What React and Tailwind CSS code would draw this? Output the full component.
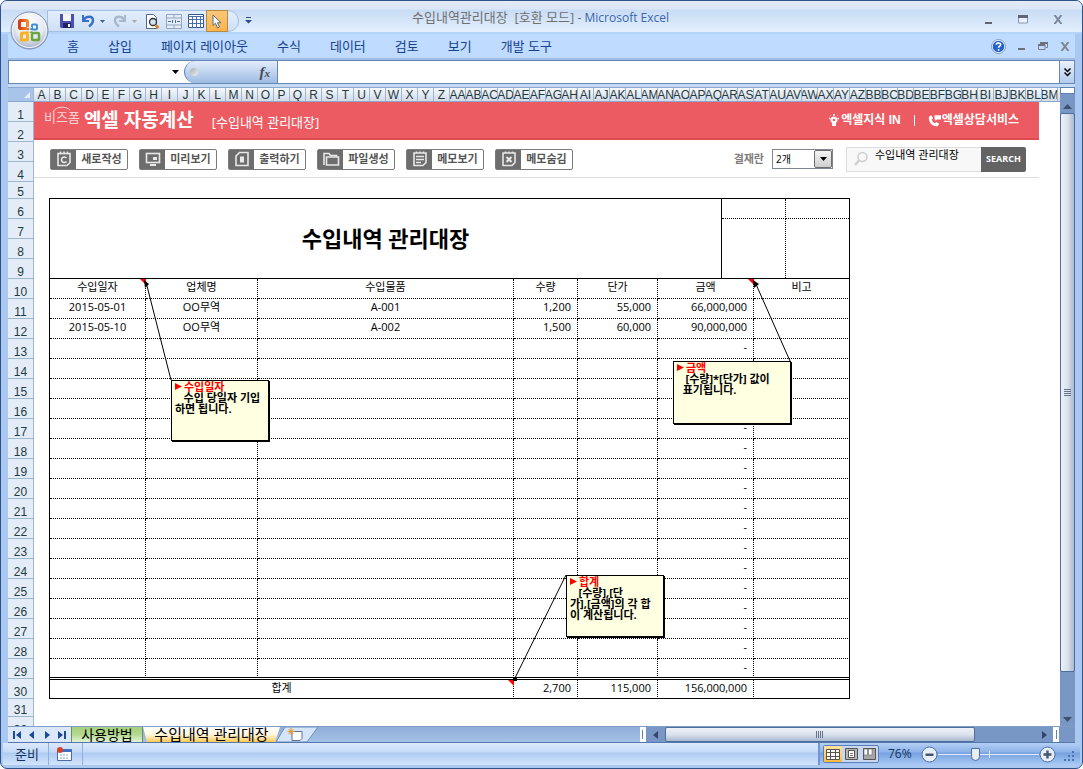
import React, { useState } from 'react';

const kr = "font-['Open_Sans','Noto_Sans_CJK_KR',sans-serif]";
const ui = "font-['Liberation_Sans','Noto_Sans_CJK_KR',sans-serif]";

const letters = 'ABCDEFGHIJKLMNOPQRSTUVWXYZ'.split('');
// column BA is hidden on this sheet
const columns = [
  ...letters,
  ...letters.map((l) => 'A' + l),
  ...letters.slice(1, 13).map((l) => 'B' + l),
];

const menus = ['홈', '삽입', '페이지 레이아웃', '수식', '데이터', '검토', '보기', '개발 도구'];

const entries = [
  { date: '2015-05-01', company: 'OO무역', item: 'A-001', qty: '1,200', price: '55,000', amount: '66,000,000' },
  { date: '2015-05-10', company: 'OO무역', item: 'A-002', qty: '1,500', price: '60,000', amount: '90,000,000' },
  ...Array.from({ length: 17 }, () => ({ date: '', company: '', item: '', qty: '', price: '', amount: '-' })),
];

const iconProps = { width: 18, height: 18, viewBox: '0 0 18 18', fill: 'none', stroke: '#e8e8e8', strokeWidth: 1.6 };

const tools = [
  {
    label: '새로작성',
    icon: (
      <svg {...iconProps}>
        <path d="M3 3.5h12v9l-3 3H3z M5.5 1.5v3 M9 1.5v3 M12.5 1.5v3" />
        <path d="M11.5 8a2.8 2.8 0 1 0 0 3.5" />
      </svg>
    ),
  },
  {
    label: '미리보기',
    icon: (
      <svg {...iconProps}>
        <rect x="2.5" y="3.5" width="13" height="9" />
        <path d="M6 15h6" strokeWidth="2" />
        <rect x="9" y="7" width="4" height="3" fill="#e8e8e8" stroke="none" />
      </svg>
    ),
  },
  {
    label: '출력하기',
    icon: (
      <svg {...iconProps}>
        <path d="M6.5 2.5H15v13H3V6z" />
        <path d="M7 6.5h4v6H7z" fill="#e8e8e8" stroke="none" />
      </svg>
    ),
  },
  {
    label: '파일생성',
    icon: (
      <svg {...iconProps}>
        <path d="M2 15V3.5h5l1.5 2h6V7" />
        <path d="M4.5 15V7h12v8z" />
      </svg>
    ),
  },
  {
    label: '메모보기',
    icon: (
      <svg {...iconProps}>
        <path d="M3 3h12v9.5l-3 3H3z M5.5 1.5v2 M9 1.5v2 M12.5 1.5v2 M5 6.5h8 M5 9.5h8 M5 12.5h5" />
      </svg>
    ),
  },
  {
    label: '메모숨김',
    icon: (
      <svg {...iconProps}>
        <path d="M3 3h12v9.5l-3 3H3z M5.5 1.5v2 M9 1.5v2 M12.5 1.5v2" />
        <path d="M6.5 7l5 5 M11.5 7l-5 5" strokeWidth="2" />
      </svg>
    ),
  },
];

const OfficeOrb = () => (
  <button aria-label="Office" className="absolute left-[9px] top-[10px] z-10">
    <svg width="40" height="40" viewBox="0 0 40 40">
      <defs>
        <radialGradient id="orb" cx="50%" cy="30%" r="70%">
          <stop offset="0" stopColor="#ffffff" />
          <stop offset="0.6" stopColor="#e4e8f0" />
          <stop offset="1" stopColor="#a3afc6" />
        </radialGradient>
        <linearGradient id="orange" x1="0" x2="1">
          <stop offset="0" stopColor="#d63c12" />
          <stop offset="1" stopColor="#f28a2e" />
        </linearGradient>
      </defs>
      <circle cx="19.5" cy="19.5" r="18.5" fill="url(#orb)" stroke="#7c8fb0" />
      <circle cx="19.5" cy="19.5" r="17" fill="none" stroke="#f6f8fc" />
      <g fill="none">
        <rect x="9.5" y="9.5" width="8" height="8" rx="1" stroke="url(#orange)" strokeWidth="3" />
        <rect x="22" y="13.500" width="5" height="5" rx="1" stroke="#3d8fd6" strokeWidth="2" />
        <rect x="11.500" y="22" width="6" height="7" rx="1" stroke="#f6b221" strokeWidth="3" />
        <rect x="22" y="22" width="7" height="7" rx="1" stroke="#69a63c" strokeWidth="2.500" />
      </g>
      <path d="M17 16h5v7h-5z" fill="#e8ecf3" />
      <g fill="#e0702a">
        <circle cx="18" cy="18" r="1.300" />
        <circle cx="21.500" cy="18" r="1.300" fill="#3d8fd6" />
        <circle cx="18" cy="21.500" r="1.300" fill="#f6b221" />
        <circle cx="21.500" cy="21.500" r="1.300" fill="#69a63c" />
      </g>
    </svg>
  </button>
);

const SmallArrow = ({ color }) => (
  <svg width="5" height="3" viewBox="0 0 5 3"><path d="M0 0h5L2.500 3z" fill={color} /></svg>
);

const QuickAccess = () => (
  <div className="ml-[46px] mt-[9px] flex h-[22px] w-[192px] shrink-0 items-center rounded-r-full border border-[#a4bfe4] bg-linear-to-b from-[#e3eefc] to-[#cfe0f6] pl-[12px]">
    <button aria-label="저장" className="w-[18px]">
      <svg width="14" height="14" viewBox="0 0 14 14">
        <path d="M0 0h14v14H1l-1-1z" fill="#4a4fb0" />
        <path d="M3 0h8v7H3z" fill="#f3f5ff" />
        <path d="M3 9h8v5H3z" fill="#20245e" />
        <path d="M8 10h2v3H8z" fill="#fff" />
      </svg>
    </button>
    <button aria-label="실행 취소" className="ml-[3px] flex w-[26px] items-center gap-[5px]">
      <svg width="14" height="14" viewBox="0 0 14 14">
        <path d="M2 1v6h6" fill="none" stroke="#3a6fc9" strokeWidth="2" />
        <path d="M2.500 6.500C5 1.500 12 1.500 12 6.500c0 3-2 4.500-4 6" fill="none" stroke="#3a6fc9" strokeWidth="2.400" />
      </svg>
      <SmallArrow color="#3b5fa0" />
    </button>
    <button aria-label="다시 실행" className="ml-[6px] flex w-[26px] items-center gap-[5px]">
      <svg width="14" height="14" viewBox="0 0 14 14">
        <path d="M12 1v6H6" fill="none" stroke="#a9b7cd" strokeWidth="2" />
        <path d="M11.500 6.500C9 1.500 2 1.500 2 6.500c0 3 2 4.500 4 6" fill="none" stroke="#a9b7cd" strokeWidth="2.400" />
      </svg>
      <SmallArrow color="#a9a9a9" />
    </button>
    <button aria-label="인쇄 미리 보기" className="ml-[6px] w-[16px]">
      <svg width="15" height="15" viewBox="0 0 15 15">
        <path d="M1.500.500h7l3 3v11h-10z" fill="#fff" stroke="#55657f" />
        <circle cx="8" cy="8" r="3.500" fill="#cfe3f5" stroke="#333" strokeWidth="1.300" />
        <path d="M10.500 11l3 3" stroke="#d9852b" strokeWidth="2.500" />
      </svg>
    </button>
    <button aria-label="병합하고 가운데 맞춤" className="ml-[5px] w-[17px]">
      <svg width="16" height="15" viewBox="0 0 16 15" fill="#e4ecf7" stroke="#94a6c2">
        <path d="M.500.500h15v14H.500z M.500 4h15 M.500 11h15 M8 .500V4 M8 11v3.500" />
        <path d="M2 7.500h3 M11 7.500h3 M6.500 6v3 M9.500 6v3" stroke="#4e6c9c" />
      </svg>
    </button>
    <button aria-label="표" className="ml-[5px] w-[16px]">
      <svg width="16" height="14" viewBox="0 0 16 14">
        <path d="M.500.500h15v13H.500z" fill="#fff" stroke="#35558c" />
        <path d="M0 2.500h16M0 5.500h16M0 9.500h16M4.500 2v12M8.500 2v12M12.500 2v12" stroke="#4a6ea8" />
      </svg>
    </button>
    <button aria-label="개체 선택" className="ml-[2px] flex h-[22px] w-[22px] items-center justify-center border border-[#b48a45] bg-linear-to-b from-[#f7c678] to-[#fdb44a]">
      <svg width="10" height="15" viewBox="0 0 10 15">
        <path d="M1 1v10.500l2.500-2.300L5.500 14l2-1-2-4.300H9z" fill="#fff" stroke="#5d6b84" />
      </svg>
    </button>
  </div>
);

const TitleBar = () => (
  <header className="relative flex h-[33px] shrink-0 border-b-2 border-[#b3d3f7] bg-[linear-gradient(#e4ebf9_0,#dbe6f7_8px,#c9dcf5_9px,#e2effd_100%)]">
    <OfficeOrb />
    <QuickAccess />
    <button aria-label="빠른 실행 도구 모음 사용자 지정" className="ml-[6px] mt-[15px] h-[8px]">
      <svg width="7" height="7" viewBox="0 0 7 7"><path d="M1 0h5v1H1z M0 3h7L3.500 6.500z" fill="#2d4b86" /></svg>
    </button>
    <h1 className={`${kr} flex-1 whitespace-pre pl-[160px] pt-[6px] text-[13px] leading-[20px] text-[#6f6f6f]`}>
      수입내역관리대장  [호환 모드] <span className="text-xs text-[#3a66ad]">- Microsoft Excel</span>
    </h1>
    <div className="flex items-center gap-[25px] pr-[19px] pt-[6px]">
      <button aria-label="최소화">
        <svg width="10" height="12"><path d="M2 8h7v2H2z" fill="#5f6673" /></svg>
      </button>
      <button aria-label="최대화">
        <svg width="10" height="9" viewBox="0 0 10 9"><path d="M.500 1.500h9v6.500h-9z" fill="#e7f0fc" stroke="#8b99b0" /><path d="M0 0h10v3H0z" fill="#5f6673" /></svg>
      </button>
      <button aria-label="닫기">
        <svg width="10" height="9" viewBox="0 0 10 9"><path d="M1.500 0L8.500 9M8.500 0l-7 9" stroke="#7d8796" strokeWidth="2" /></svg>
      </button>
    </div>
  </header>
);

const RibbonTabs = () => (
  <nav className="flex h-[26px] shrink-0 items-center gap-[29px] border-b-2 border-[#9fbde3] bg-[#bfdbff] pl-[59px] pr-[5px]">
    {menus.map((menu) => (
      <button key={menu} className={`${kr} whitespace-nowrap text-[13px] leading-[18px] text-[#15428b]`}>{menu}</button>
    ))}
    <div className="ml-auto flex items-center gap-[12px]">
      <button aria-label="도움말">
        <svg width="15" height="15" viewBox="0 0 15 15">
          <circle cx="7.500" cy="7.500" r="6.500" fill="#2561cf" stroke="#eef5ff" strokeWidth="1.500" />
          <circle cx="7.500" cy="7.500" r="7" fill="none" stroke="#6485bd" strokeWidth=".8" />
          <path d="M5.300 5.800c.2-2.600 4.500-2.400 4.300 0-.1 1.300-2 1.400-2 3M7.600 10v1.700" fill="none" stroke="#fff" strokeWidth="1.600" />
        </svg>
      </button>
      <button aria-label="창 최소화">
        <svg width="8" height="10"><path d="M0 7h7v2H0z" fill="#6d7178" /></svg>
      </button>
      <button aria-label="창 복원">
        <svg width="10" height="9" viewBox="0 0 10 9"><path d="M2.500 2V.500h7v5H8M.500 2.500h6.500v5H.500z" fill="none" stroke="#7b8088" /><path d="M2 0h8v2H2zM0 2h7v2H0z" fill="#6d7178" /></svg>
      </button>
      <button aria-label="창 닫기">
        <svg width="10" height="9" viewBox="0 0 10 9"><path d="M1.500 0L8.500 9M8.500 0l-7 9" stroke="#80858d" strokeWidth="2" /></svg>
      </button>
    </div>
  </nav>
);

const FormulaBar = () => (
  <div className="flex h-[24px] shrink-0 border border-[#6688b6] bg-white">
    <input aria-label="이름 상자" className="w-[158px] px-1 text-xs outline-none" />
    <button aria-label="이름 목록" className="flex w-[17px] items-center justify-center">
      <svg width="7" height="4" viewBox="0 0 7 4"><path d="M0 0h7L3.500 4z" fill="#000" /></svg>
    </button>
    <div className="flex w-[94px] items-center justify-between rounded-l-full border-x border-[#6688b6] bg-linear-to-b from-[#e3edfb] to-[#9dbbe3] pl-[5px] pr-[7px]">
      <span className="h-[8px] w-[8px] rounded-full bg-linear-to-br from-[#a9acb2] to-[#eef1f6]" />
      <button className="font-['Liberation_Serif',serif] text-[15px] font-bold italic leading-[20px] text-[#454a55]">
        f<span className="text-[11px]">x</span>
      </button>
    </div>
    <input aria-label="수식 입력줄" className="min-w-0 flex-1 px-1 text-xs outline-none" />
    <button aria-label="수식 입력줄 확장" className="flex w-[15px] items-center justify-center border-l border-[#6688b6] bg-linear-to-b from-[#e9f1fc] to-[#b4cbec]">
      <svg width="7" height="9" viewBox="0 0 7 9" fill="none" stroke="#000" strokeWidth="1.500"><path d="M.500.500l3 3 3-3M.500 4.500l3 3 3-3" /></svg>
    </button>
  </div>
);

const RowHeaders = () => (
  <div className={`${ui} w-[26px] shrink-0 overflow-hidden border-r border-[#9eb6ce] bg-[#e4ecf7] text-xs leading-[12px] text-[#1f3b3f]`}>
    {Array.from({ length: 32 }, (_, i) => (
      <div
        key={i}
        className={`flex items-end justify-center border-b border-[#9eb6ce] ${i === 4 ? 'h-[17px]' : i === 30 ? 'h-[18px]' : 'h-[20px]'}`}
      >
        {i + 1}
      </div>
    ))}
  </div>
);

const Banner = () => (
  <div className={`${kr} mr-[21px] flex h-[38px] items-center border-b-2 border-[#dc4b51] bg-[#ed5b62] pl-[10px] pr-[20px] text-white`}>
    <span className="relative mb-[7px] text-[13px] leading-[16px] text-[#fbd3d5]">
      비즈폼
      <svg className="absolute left-[8px] top-[-3px]" width="20" height="7" viewBox="0 0 20 7">
        <path d="M1 6C4 0 14 0 18 4" fill="none" stroke="#fbd3d5" />
      </svg>
    </span>
    <strong className="ml-[4px] text-[19px] leading-[24px]">엑셀 자동계산</strong>
    <span className="ml-[18px] mt-[3px] text-[13px] leading-[18px]">[수입내역 관리대장]</span>
    <div className={`${ui} ml-auto flex items-center text-[12px] font-bold leading-[16px]`}>
      <a href="#knowledge" className="flex items-center gap-[2px]">
        <svg width="10" height="13" viewBox="0 0 10 13" fill="#fff">
          <path d="M5 2.500a3.500 3.500 0 0 1 2 6.400V12H3V8.900A3.500 3.500 0 0 1 5 2.500z" />
          <circle cx="5" cy="6" r="1.200" fill="#ed5b62" />
          <path d="M4.500 0h1v1.500h-1zM0 4h1.200v1H0zM8.800 4H10v1H8.800zM1 1l1 1M9 1L8 2" stroke="#fff" strokeWidth=".6" />
        </svg>
        엑셀지식 IN
      </a>
      <span className="mx-[13px] h-[11px] w-px bg-white" />
      <a href="#service" className="flex items-center">
        <svg width="14" height="13" viewBox="0 0 15 13" fill="#fff">
          <path d="M1 2.500L3.500 1l2 3L4 5.500c.5 2 1.800 3.500 3.500 4L9 8l3 2-1.500 2.500C5 14 0 8 1 2.500z" />
          <path d="M7 1h7v4.500H9.500L8 7V5.500H7z" />
        </svg>
        엑셀상담서비스
      </a>
    </div>
  </div>
);

const Toolbar = () => {
  const [count, setCount] = useState('2개');
  const [keyword, setKeyword] = useState('수입내역 관리대장');

  return (
    <div className={`${kr} mr-[21px] flex h-[38px] items-center border-b border-[#dedede] pl-[16px] pr-[13px] pt-px`}>
      <div className="flex gap-[11px]">
        {tools.map((tool) => (
          <button key={tool.label} className="flex h-[21px] w-[78px] rounded-xs border border-[#7b7b7b] bg-white">
            <span className="flex h-full w-[25px] items-center justify-center bg-[#6d6d6d]">{tool.icon}</span>
            <span className="flex-1 whitespace-nowrap text-center text-[11px] font-bold leading-[18px] text-[#555]">{tool.label}</span>
          </button>
        ))}
      </div>
      <label htmlFor="sign" className="ml-auto text-[11px] font-bold text-[#7d7d7d]">결재란</label>
      <div className="relative ml-[8px] h-[20px] w-[61px] border border-[#7f868f]">
        <select
          id="sign"
          value={count}
          onChange={(e) => setCount(e.target.value)}
          className="block h-[18px] w-full appearance-none bg-white pl-[3px] text-[10px] leading-[16px] outline-none"
        >
          <option>1개</option>
          <option>2개</option>
          <option>3개</option>
        </select>
        <span className="pointer-events-none absolute inset-y-0 right-0 flex w-[18px] items-center justify-center rounded-xs border border-[#6f6f6f] bg-linear-to-b from-[#f4f4f4] to-[#cfcfcf]">
          <svg width="7" height="4" viewBox="0 0 7 4"><path d="M0 0h7L3.500 4z" fill="#000" /></svg>
        </span>
      </div>
      <div className="ml-[13px] flex h-[25px]">
        <label htmlFor="keyword" aria-label="검색어" className="flex w-[29px] items-center justify-center border border-r-0 border-[#dcdcdc] bg-[#f8f8f8]">
          <svg width="16" height="16" viewBox="0 0 16 16" fill="none" stroke="#cfcfcf">
            <circle cx="9.500" cy="6" r="4.500" strokeWidth="1.600" />
            <path d="M6 9.500L2 14" strokeWidth="2.500" />
          </svg>
        </label>
        <input
          id="keyword"
          value={keyword}
          onChange={(e) => setKeyword(e.target.value)}
          className="w-[106px] border-y border-[#dcdcdc] bg-[#f8f8f8] pb-[8px] text-[11px] leading-[14px] text-black outline-none"
        />
        <button className="w-[45px] rounded-r-xs bg-[#636363] text-center text-[9px] font-bold text-white">SEARCH</button>
      </div>
    </div>
  );
};

const Ledger = () => (
  <section className={`${kr} ml-[15px] mt-[20px] w-[801px] border-l border-t border-black text-[11px] leading-[14px] text-black`}>
    <div className="flex h-[80px] border-b border-r border-black">
      <h2 className="flex flex-1 items-center justify-center border-r border-black pb-[2px] text-[22px] font-bold">수입내역 관리대장</h2>
      <div className="grid w-[127px] grid-cols-[64px_1fr] grid-rows-[20px_1fr]">
        <div className="border-b border-r border-dotted border-black" />
        <div className="border-b border-dotted border-black" />
        <div className="border-r border-dotted border-black" />
        <div />
      </div>
    </div>
    <table className="w-full table-fixed border-separate border-spacing-0 [&_td]:border-r [&_td]:border-dotted [&_td]:p-0 [&_td]:pb-[3px] [&_th]:border-b [&_th]:border-r [&_th]:border-dotted [&_th]:p-0 [&_th]:pb-[3px] [&_th]:font-normal [&_tr>*:last-child]:[border-right-style:solid]">
      <colgroup>
        <col className="w-[96px]" />
        <col className="w-[112px]" />
        <col className="w-[256px]" />
        <col className="w-[64px]" />
        <col className="w-[80px]" />
        <col className="w-[96px]" />
        <col />
      </colgroup>
      <thead>
        <tr className="h-[20px]">
          <th>수입일자</th>
          <th>업체명</th>
          <th>수입물품</th>
          <th>수량</th>
          <th>단가</th>
          <th>금액</th>
          <th>비고</th>
        </tr>
      </thead>
      <tbody className="text-center [&_td]:border-b [&_tr:last-child>td]:border-b-[3px] [&_tr:last-child>td]:[border-bottom-style:double]">
        {entries.map((row, i) => (
          <tr key={i} className="h-[20px] last:h-[21px]">
            <td>{row.date}</td>
            <td>{row.company}</td>
            <td>{row.item}</td>
            <td className="text-right"><span className="pr-[6px]">{row.qty}</span></td>
            <td className="text-right"><span className="pr-[6px]">{row.price}</span></td>
            <td className="text-right"><span className="pr-[6px]">{row.amount}</span></td>
            <td />
          </tr>
        ))}
      </tbody>
      <tfoot className="[&_td]:border-b [&_td]:[border-bottom-style:solid]">
        <tr className="h-[19px]">
          <td colSpan={3} className="text-center">합계</td>
          <td className="text-right"><span className="pr-[6px]">2,700</span></td>
          <td className="text-right"><span className="pr-[6px]">115,000</span></td>
          <td className="text-right"><span className="pr-[6px]">156,000,000</span></td>
          <td />
        </tr>
      </tfoot>
    </table>
  </section>
);

const Note = ({ title, place, children }) => (
  <aside className={`${kr} absolute whitespace-pre border border-black bg-[#ffffe1] pl-[3px] text-[11px] font-bold leading-[11px] text-black shadow-[1px_1px_0_#000] ${place}`}>
    <div className="flex items-center gap-[2px] text-[#ff0000]">
      <svg width="7" height="7" viewBox="0 0 7 7"><path d="M0 0l7 3.500L0 7z" fill="#f00" /></svg>
      {title}
    </div>
    {children}
  </aside>
);

const NoteLines = () => (
  <svg className="pointer-events-none absolute left-0 top-0" width="900" height="620" viewBox="0 0 900 620">
    <g fill="#f00">
      <path d="M106 177h6v6z" />
      <path d="M714 177h6v6z" />
      <path d="M474 578h6v6z" />
    </g>
    <g stroke="#000" strokeWidth="1">
      <path d="M112 180L137 278" />
      <path d="M721 180L756 259" />
      <path d="M481 576L532 473" />
    </g>
    <path d="M110 178l5 4-4 4z M719 178l6 4-5 4z M479 575h4v4h-4z" fill="#000" />
  </svg>
);

const VerticalScroll = () => (
  <div className="flex w-[15px] shrink-0 flex-col items-center bg-[#7897c4]">
    <div className="h-[7px] w-full border border-[#5f82b5] bg-white" />
    <button aria-label="위로" className="flex h-[19px] items-center pt-[5px]">
      <svg width="9" height="5" viewBox="0 0 9 5"><path d="M0 5h9L4.500 0z" fill="#3f4f6e" /></svg>
    </button>
    <div className="flex w-full flex-[559] flex-col items-center justify-center gap-px rounded-xs border border-[#4f6d9b] bg-linear-to-r from-[#eef2f8] via-[#dbe2ec] to-[#a9b9d0]">
      {[0, 1, 2, 3].map((n) => <i key={n} className="h-px w-[7px] bg-[#66758c]" />)}
    </div>
    <div className="flex-[40]" />
    <button aria-label="아래로" className="flex h-[14px] items-center">
      <svg width="9" height="5" viewBox="0 0 9 5"><path d="M0 0h9L4.500 5z" fill="#3f4f6e" /></svg>
    </button>
  </div>
);

const navPaths = ['M0 0h2v8H0zM8 0v8L3 4z', 'M6 0v8L1 4z', 'M2 0v8l5-4z', 'M0 0v8l5-4zM6 0h2v8H6z'];
const navLabels = ['첫 시트', '이전 시트', '다음 시트', '마지막 시트'];

const Splitter = () => (
  <div className="flex w-[6px] justify-center border border-white bg-white py-[2px]">
    <i className="w-px bg-[#5f82b5]" />
  </div>
);

const SheetTabs = () => (
  <div className="flex h-[17px] shrink-0 border-b border-t border-b-[#5478ab] border-t-[#7f9dc6] bg-linear-to-b from-[#8fadd8] to-[#a5c1e8]">
    <div className="flex w-[63px] items-center justify-around bg-[#dbe8f9] px-px">
      {navPaths.map((d, i) => (
        <button key={d} aria-label={navLabels[i]}>
          <svg width="8" height="8" viewBox="0 0 8 8"><path d={d} fill="#1c4a94" /></svg>
        </button>
      ))}
    </div>
    <button className={`${kr} w-[72px] border-x border-[#6b8f62] bg-linear-to-b from-[#a5cf7c] via-[#b4d98f] to-[#e3f3d3] text-[14px] leading-[13px] text-black`}>
      사용방법
    </button>
    <button className={`${kr} w-[137px] whitespace-nowrap bg-linear-to-b from-white via-[#fff6dc] to-[#fbc94b] text-[15px] leading-[13px] text-black [clip-path:polygon(0_0,100%_0,132px_100%,4px_100%)]`}>
      수입내역 관리대장
    </button>
    <button aria-label="워크시트 삽입" className="-ml-[4px]">
      <svg width="42" height="15" viewBox="0 0 42 15">
        <path d="M0 15L9 0h33l-11 15z" fill="#d5e4f8" stroke="#6c8fc2" />
        <path d="M16 4.500h10v7l-2 2h-8z" fill="#fff" stroke="#5d7296" />
        <path d="M15 1v7M11.500 4.500h7M12.500 2l5 5M17.500 2l-5 5" stroke="#e39a2b" />
      </svg>
    </button>
    <div className="flex-[322]" />
    <div className="flex flex-[436] bg-[#7897c4]">
      <Splitter />
      <button aria-label="왼쪽으로" className="flex w-[19px] items-center justify-center">
        <svg width="5" height="8" viewBox="0 0 5 8"><path d="M5 0v8L0 4z" fill="#34466b" /></svg>
      </button>
      <div className="flex flex-[310] items-center justify-center gap-px rounded-xs border border-[#4f6d9b] bg-linear-to-b from-[#eef2f8] via-[#dbe2ec] to-[#a9b9d0]">
        {[0, 1, 2, 3].map((n) => <i key={n} className="h-[7px] w-px bg-[#66758c]" />)}
      </div>
      <div className="flex-[60]" />
      <button aria-label="오른쪽으로" className="flex w-[18px] items-center justify-center">
        <svg width="5" height="8" viewBox="0 0 5 8"><path d="M0 0v8l5-4z" fill="#34466b" /></svg>
      </button>
      <Splitter />
      <div className="w-[16px]" />
    </div>
  </div>
);

const StatusBar = () => {
  const [zoom, setZoom] = useState(36);

  return (
    <footer className={`${kr} mx-[2px] flex h-[22px] shrink-0 items-center bg-[linear-gradient(#dce9fc_0,#c4daf7_9px,#aecbf3_10px,#d3e4fb_100%)] text-[13px] text-[#15325f]`}>
      <span className="ml-[12px] w-[33px] leading-[18px]">준비</span>
      <span className="h-full w-px bg-[#8fb0de]" />
      <button aria-label="매크로 기록" className="ml-[8px] mr-[10px]">
        <svg width="15" height="14" viewBox="0 0 15 14">
          <path d="M.500 2.500h14v11H.500z" fill="#fff" stroke="#4c6ba3" />
          <path d="M4 2h10.500v3H4z" fill="#3f6fc0" />
          <path d="M3 8h9M3 11h9" stroke="#8ba3cb" strokeDasharray="2 1" />
          <circle cx="3" cy="3" r="3" fill="#d9412a" />
        </svg>
      </button>
      <span className="h-full w-px bg-[#8fb0de]" />
      <div className="ml-auto flex h-full items-center border-l-2 border-[#6f97d2] bg-[linear-gradient(#b3cff5_0,#8db3e8_9px,#76a1df_10px,#a9c9f5_100%)] pl-[3px] pr-[5px]">
        <div className="flex h-[18px] rounded-xs border border-[#5b7fb6] bg-[#c9d8ee]">
          <button aria-label="기본" className="flex w-[18px] items-center justify-center bg-linear-to-b from-[#fde3a2] to-[#fdbb3c]">
            <svg width="14" height="11" viewBox="0 0 14 11"><path d="M.500.500h13v10H.500zM.500 3.500h13M.500 7.500h13M4.500 .500v10M9.500 .500v10" fill="#fff" stroke="#5c5446" /></svg>
          </button>
          <button aria-label="페이지 레이아웃" className="flex w-[18px] items-center justify-center">
            <svg width="13" height="12" viewBox="0 0 13 12"><path d="M.500.500h12v11H.500z" fill="#b5b5b5" stroke="#555" /><path d="M3.500 2.500h6v7h-6z" fill="#fff" stroke="#555" /><path d="M5 5.500h3M5 7.500h3" stroke="#777" /></svg>
          </button>
          <button aria-label="페이지 나누기 미리 보기" className="flex w-[18px] items-center justify-center">
            <svg width="13" height="12" viewBox="0 0 13 12"><path d="M.500.500h12v11H.500z" fill="#a7a7a7" stroke="#555" /><path d="M1 1h3.500v6H1zM5.500 1h3.500v6H5.500z" fill="#fff" stroke="#666" strokeWidth=".6" /></svg>
          </button>
        </div>
        <button className="ml-[9px] w-[33px] text-left text-[12px] leading-[18px]">76%</button>
        <button aria-label="축소">
          <svg width="17" height="17" viewBox="0 0 17 17"><circle cx="8.500" cy="8.500" r="7.500" fill="#e6eefa" stroke="#4f6c9c" /><path d="M4.500 7.500h8v2.500h-8z" fill="#47556e" /></svg>
        </button>
        <div className="relative flex w-[101px] items-center">
          <input
            type="range"
            aria-label="확대/축소"
            min="0"
            max="100"
            value={zoom}
            onChange={(e) => setZoom(e.target.value)}
            className="h-[14px] w-full appearance-none bg-[linear-gradient(#dfeafc,#dfeafc)] bg-[length:100%_1px] bg-center bg-no-repeat [&::-webkit-slider-thumb]:h-[13px] [&::-webkit-slider-thumb]:w-[9px] [&::-webkit-slider-thumb]:appearance-none [&::-webkit-slider-thumb]:rounded-b-full [&::-webkit-slider-thumb]:border [&::-webkit-slider-thumb]:border-[#4f6c9c] [&::-webkit-slider-thumb]:bg-[#e6eefa]"
          />
          <span className="pointer-events-none absolute left-1/2 h-[7px] w-px bg-[#dfeafc]" />
        </div>
        <button aria-label="확대">
          <svg width="17" height="17" viewBox="0 0 17 17"><circle cx="8.500" cy="8.500" r="7.500" fill="#e6eefa" stroke="#4f6c9c" /><path d="M4.500 7.300h8v2.400h-8zM7.300 4.500h2.400v8H7.300z" fill="#47556e" /></svg>
        </button>
        <svg className="ml-[8px] mt-[5px]" width="11" height="11" viewBox="0 0 11 11" fill="#4c74b3"><path d="M8 0h2v2H8zM8 4h2v2H8zM4 4h2v2H4zM8 8h2v2H8zM4 8h2v2H4zM0 8h2v2H0z" /></svg>
      </div>
    </footer>
  );
};

const App = () => (
  <div className="h-screen bg-white">
    <div className="flex h-full flex-col overflow-hidden rounded-[7px] border border-[#2f5288] bg-[#aac8f0]">
      <TitleBar />
      <main className="mx-[7px] flex min-h-0 flex-1 flex-col">
        <RibbonTabs />
        <FormulaBar />
        <div className="flex min-h-0 flex-1 border-t-[3px] border-[#c5daf5]">
          <div className="flex min-w-0 flex-1 flex-col">
            <div className={`${ui} flex h-[15px] shrink-0 overflow-hidden border-b border-t border-[#8ba7cd] bg-linear-to-b from-[#f7f9fc] to-[#d3dbe9] text-xs leading-[14px] text-[#1f3b3f]`}>
              <div className="flex w-[26px] shrink-0 items-end justify-end border-r border-[#9eb6ce] bg-[#a9c4e9] p-[3px]">
                <svg width="6" height="6"><path d="M6 0v6H0z" fill="#e4edf9" /></svg>
              </div>
              {columns.map((col) => (
                <div key={col} className="flex w-[16px] shrink-0 justify-center overflow-hidden border-r border-[#9eb6ce]">{col}</div>
              ))}
            </div>
            <div className="flex min-h-0 flex-1">
              <RowHeaders />
              <div className="relative min-w-0 flex-1 overflow-hidden bg-white">
                <Banner />
                <Toolbar />
                <Ledger />
                <NoteLines />
                <Note title="수입일자" place="left-[137px] top-[278px] h-[61px] w-[98px]">
                  {'   수입 당일자 기입\n하면 됩니다.'}
                </Note>
                <Note title="금액" place="left-[639px] top-[259px] h-[63px] w-[118px]">
                  {'   [수량]*[단가] 값이\n  표기됩니다.'}
                </Note>
                <Note title="합계" place="left-[532px] top-[473px] h-[62px] w-[98px]">
                  {'   [수량],[단\n가],[금액]의 각 합\n이 계산됩니다.'}
                </Note>
              </div>
            </div>
          </div>
          <VerticalScroll />
        </div>
        <SheetTabs />
      </main>
      <StatusBar />
      <div className="h-[3px] shrink-0" />
    </div>
  </div>
);

export default App;
